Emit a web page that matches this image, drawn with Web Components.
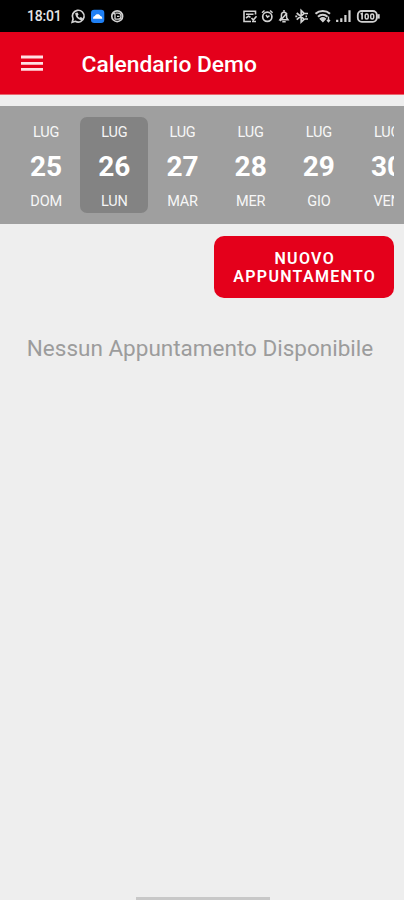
<!DOCTYPE html>
<html lang="it">
<head>
<meta charset="utf-8">
<title>Calendario Demo</title>
<style>
html,body{margin:0;padding:0}
body{width:404px;height:900px;overflow:hidden;background:#eee;font-family:Roboto,"Liberation Sans",sans-serif}
</style>
</head>
<body>
<calendar-screen></calendar-screen>
<script>
const define = (name, html) => customElements.define(name, class extends HTMLElement {
  constructor() {
    super();
    this.attachShadow({ mode: 'open' }).innerHTML = html;
  }
});

define('status-bar', `
<style>
:host{display:flex;justify-content:space-between;box-sizing:border-box;height:32px;background:#000;color:#e6e6e6;padding:0 23px 0 27px}
.side{display:flex;align-items:center;height:32px}
.time{font-size:14px;font-weight:500;letter-spacing:-.2px;width:43px;line-height:32px}
svg{display:block;fill:none;stroke:#d2d2d2;stroke-width:1.7}
</style>
<div class="side">
  <span class="time">18:01</span>
  <svg width="56" height="32" viewBox="70 0 56 32">
    <path d="M72.2 22.3l.9-3.2a5.900 5.900 0 1 1 2.200 2.200z"/>
    <path d="M75.200 12.900c.3 4.200 2.500 6.700 6.800 7.200l1-1.900-2.200-1.300-1.200.9c-1-.5-1.500-1.100-1.900-2l.9-1.200-1-2z" fill="#d2d2d2" stroke="none"/>
    <rect x="91" y="9.700" width="13.300" height="13.300" rx="3.200" fill="#1f80f5" stroke="none"/>
    <path d="M93 18.700c0-1.500.7-2.500 2-2.700.3-2.500 4.900-2.500 5.300 0 1.200.2 2 1.200 2 2.700z" fill="#fff" stroke="none"/>
    <circle cx="117.200" cy="16.200" r="5.400"/>
    <path d="M112.500 13.500h3M115 12.500v7M115 19.200h3a3 3 0 0 0 0-6h-2M117 16.300h2.500" stroke-width="1.300"/>
  </svg>
</div>
<div class="side">
  <svg width="140" height="32" viewBox="241 0 140 32">
    <path d="M255.500 14.500v-3.300h-11.500v10.300h7M246 14.300h7.500M246 18l2.500-1.800 2 1M251.500 18l1.800 2 3.200-3.700M252 21.500h4" stroke-width="1.600"/>
    <circle cx="267.300" cy="16.800" r="4.600"/><path d="M266 15l1.500 2.200 2-1.500M262 12.700l2.500-2.200M272.600 12.700l-2.500-2.200" stroke-width="1.500"/>
    <path d="M280 19.700l1.400-2v-2.500c0-4 5.200-4 5.200 0v2.500l1.400 2zM282.300 21.700h3.400M284 10v2M280 21l7-8" stroke-width="1.500"/>
    <path d="M296.700 13l7.500 6.200-3 2.800V10.500l3 2.900-7.500 6.200M295.300 16.300h2M305 13.500h3M305 19h3M305.500 16.300h1.500" stroke-width="1.700"/>
    <path d="M315.500 13.700c4-3.600 10.500-3.600 14.500 0M318 16.700c2.700-2.600 6.800-2.600 9.500 0" stroke-width="2.100"/>
    <path d="M320.300 18.900c1.500-1.300 3.600-1.300 5.100 0l-2.500 2.600zM328.500 16.500v5.500M327 20l1.500 1.700 1.500-1.700" fill="#d2d2d2" stroke-width="1.400"/>
    <path d="M337.200 22v-2.200M341.300 22v-3.800M345.400 22v-7M349.500 22V10.300" stroke-width="2.200"/>
    <rect x="357.800" y="11" width="19" height="10.800" rx="4" stroke-width="1.800"/>
    <path d="M378.500 14.200v4.400" stroke-width="2.400"/>
    <path d="M360.600 14l1.500-.5v6" stroke-width="1.700"/>
    <rect x="365.200" y="13.900" width="3" height="5.200" rx="1.500" stroke-width="1.500"/><rect x="370.700" y="13.900" width="3" height="5.200" rx="1.500" stroke-width="1.500"/>
  </svg>
</div>`);

define('app-bar', `
<style>
:host{display:flex;align-items:center;box-sizing:border-box;height:63px;padding-left:21px;background:#e4001b;color:#fff;border-bottom:1px solid #e9666f}
svg{display:block;width:22px;height:16px;margin-right:38.500px}
h1{margin:3px 0 0;font-size:22.800px;font-weight:500;line-height:30px;white-space:nowrap}
</style>
<svg viewBox="0 0 22 16"><path d="M0 2h22M0 8.300h22M0 14.400h22" stroke="#ffe0e3" stroke-width="2.800"/></svg>
<h1><slot></slot></h1>`);

define('day-strip', `
<style>
:host{display:block;box-sizing:border-box;height:118px;margin-top:11px;padding:11px 10px 0 12px;background:#9f9f9f}
.track{display:flex;overflow:hidden}
</style>
<div class="track"><slot></slot></div>`);

define('day-cell', `
<style>
:host{display:flex;flex-direction:column;align-items:center;box-sizing:border-box;flex:0 0 68.200px;height:96px;border-radius:7px;color:#fff}
:host([selected]){background:#838383}
.small{font-size:14.500px;line-height:18px;opacity:.92;white-space:nowrap;letter-spacing:-.2px}
.m{margin-top:7px}
.n{font-size:28px;font-weight:700;line-height:34px;margin:8px 0 9px}
</style>
<span class="small m"><slot name="month"></slot></span>
<span class="n"><slot></slot></span>
<span class="small"><slot name="day"></slot></span>`);

define('action-button', `
<style>
:host{display:block}
button{display:block;box-sizing:border-box;width:179.500px;height:61.500px;border:0;border-radius:10px;margin:0;padding:3px 0 0 2px;background:#e4001b;color:#fff;font:600 16px/18px Roboto,"Liberation Sans",sans-serif;letter-spacing:1.300px;text-align:center}
</style>
<button><slot></slot></button>`);

define('empty-message', `
<style>
:host{display:block;margin-top:35.500px;text-align:center;font-size:22.500px;line-height:30px;color:#9c9c9c;white-space:nowrap;padding-right:4px}
</style>
<slot></slot>`);

define('calendar-screen', `
<style>
:host{display:flex;flex-direction:column;width:404px;height:900px;overflow:hidden;background:#eee}
.actions{display:flex;justify-content:flex-end;padding:12px 10.500px 0 0}
.home{width:134px;height:3px;margin:auto auto 0 136px;background:#c8c8c8}
</style>
<status-bar></status-bar>
<app-bar>Calendario Demo</app-bar>
<day-strip>${[[25,'DOM'],[26,'LUN'],[27,'MAR'],[28,'MER'],[29,'GIO'],[30,'VEN']].map(([n,d]) =>
  `<day-cell${n===26?' selected':''}><span slot="month">LUG</span>${n}<span slot="day">${d}</span></day-cell>`).join('')}</day-strip>
<div class="actions"><action-button>NUOVO<br>APPUNTAMENTO</action-button></div>
<empty-message>Nessun Appuntamento Disponibile</empty-message>
<div class="home"></div>`);
</script>
</body>
</html>
